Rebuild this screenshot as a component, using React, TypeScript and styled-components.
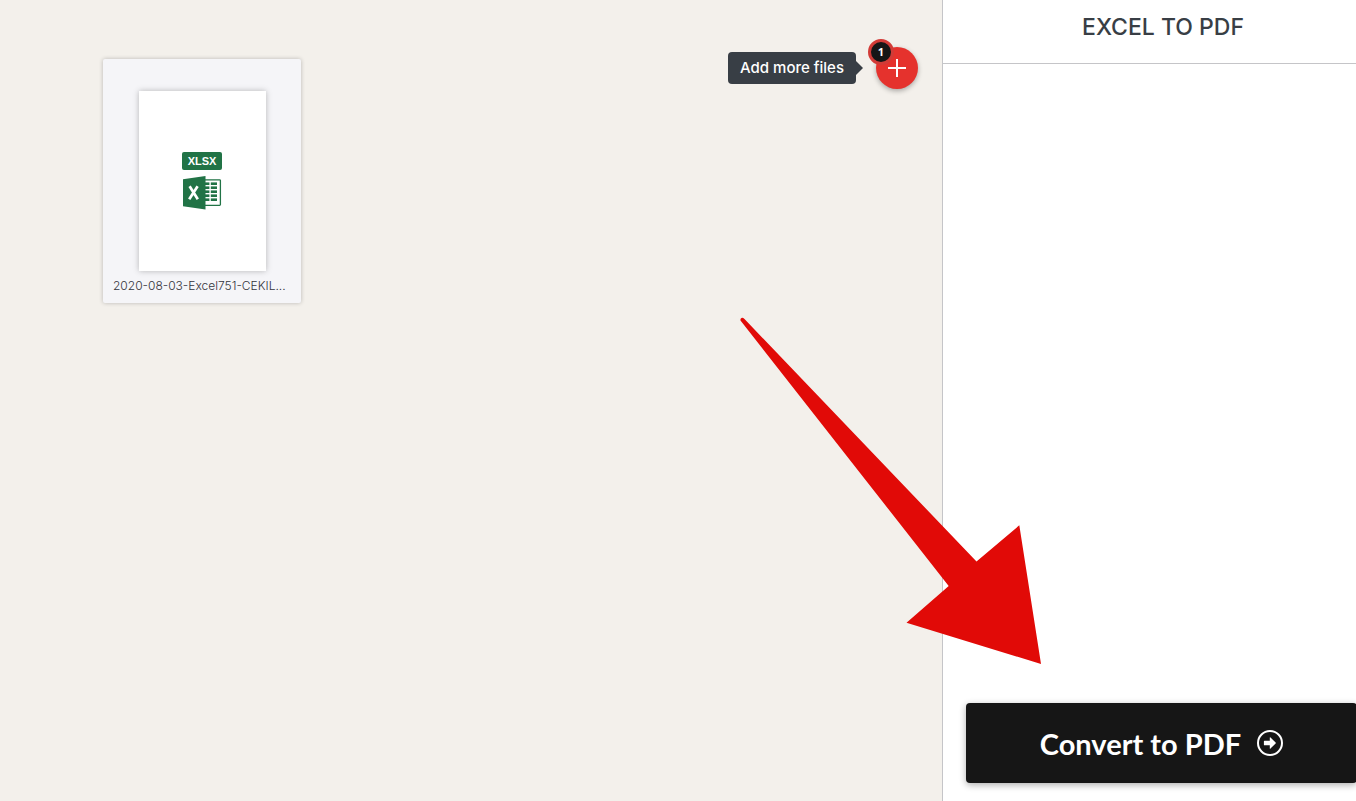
import React from "react";
import styled, { createGlobalStyle } from "styled-components";

const GlobalStyle = createGlobalStyle`
  *, *::before, *::after { box-sizing: border-box; }
  body {
    margin: 0;
    font-family: Inter, "Open Sans", sans-serif;
    color: #33333b;
    background: #f3f0eb;
  }
  button { font: inherit; border: 0; cursor: pointer; }
`;

const Page = styled.div`
  position: relative;
  display: grid;
  grid-template-columns: minmax(0, 1fr) 414px;
  min-height: 100vh;
  overflow: hidden;
`;

const Workspace = styled.main`
  display: flex;
  justify-content: space-between;
  align-items: flex-start;
  padding: 47px 24px 47px 103px;
  background: #f3f0eb;
`;

const FileCard = styled.article`
  display: flex;
  flex-direction: column;
  align-items: center;
  width: 198px;
  height: 244px;
  margin-top: 12px;
  padding-top: 32px;
  border-radius: 2px;
  background: #f5f5f8;
  box-shadow: 0 0 4px rgba(0, 0, 0, 0.24);
`;

const Thumbnail = styled.div`
  display: flex;
  flex-direction: column;
  align-items: center;
  gap: 6px;
  width: 127px;
  height: 180px;
  padding-top: 61px;
  background: #fff;
  box-shadow: 0 0 6px rgba(0, 0, 0, 0.26);
`;

const FormatTag = styled.span`
  width: 40px;
  border-radius: 2px;
  background: #217346;
  color: #fff;
  font: bold 11px/18px "Liberation Sans", Arial, sans-serif;
  text-align: center;
`;

const FileName = styled.p`
  width: 100%;
  margin: 5px 0 0;
  padding: 0 10px;
  font-size: 12px;
  font-weight: 300;
  line-height: 20px;
  white-space: nowrap;
`;

const AddFiles = styled.div`
  display: flex;
  align-items: center;
  gap: 20px;
`;

const Tooltip = styled.span`
  position: relative;
  padding: 0 12px;
  border-radius: 4px;
  background: #383e45;
  color: #fff;
  font-size: 15px;
  font-weight: 500;
  line-height: 32px;

  &::after {
    content: "";
    position: absolute;
    left: 100%;
    top: 9px;
    border: 7px solid transparent;
    border-right: 0;
    border-left-color: #383e45;
  }
`;

const AddButton = styled.button`
  position: relative;
  display: grid;
  place-items: center;
  width: 42px;
  height: 42px;
  padding: 0;
  border-radius: 50%;
  background: #e5322d;
  color: #fff;
  box-shadow: 0 2px 5px rgba(0, 0, 0, 0.3);
`;

const Count = styled.span`
  position: absolute;
  top: -8px;
  left: -8px;
  width: 26px;
  height: 26px;
  border: 3px solid #d23b37;
  border-radius: 50%;
  background: #161616;
  font-family: "Open Sans", sans-serif;
  font-size: 11px;
  font-weight: 700;
  line-height: 20px;
  text-align: center;
`;

const Sidebar = styled.aside`
  display: flex;
  border-left: 1px solid #c5c5c8;
  background: #fff;
  overflow: hidden;
`;

const Panel = styled.div`
  display: flex;
  flex: 0 0 440px;
  flex-direction: column;
  justify-content: space-between;
`;

const PanelTitle = styled.h1`
  margin: 0;
  padding: 11px 0 20px;
  border-bottom: 1px solid #c5c5c8;
  color: #383e45;
  font-size: 23px;
  font-weight: 500;
  line-height: 32px;
  text-align: center;
`;

const ConvertButton = styled.button`
  display: flex;
  align-items: center;
  justify-content: center;
  gap: 16px;
  height: 80px;
  margin: 0 26px 18px 23px;
  border-radius: 4px;
  background: #161616;
  color: #fff;
  font-family: Lato, sans-serif;
  font-size: 29px;
  font-weight: 700;
  box-shadow: 0 2px 7px rgba(0, 0, 0, 0.32);
`;

const Pointer = styled.svg`
  position: absolute;
  right: 315px;
  bottom: 137px;
  pointer-events: none;
`;

const ExcelIcon = () => (
  <svg width="40" height="34" viewBox="0 0 40 34" aria-hidden="true">
    <rect x="22" y="3.8" width="16.4" height="25.6" rx="0.8" fill="#fff" stroke="#217346" strokeWidth="1.3" />
    <g fill="#217346">
      {[6.4, 10.4, 14.4, 18.4, 22.4].map((y) => (
        <React.Fragment key={y}>
          <rect x="23" y={y} width="4.4" height="2.6" />
          <rect x="28.8" y={y} width="6.2" height="2.6" />
        </React.Fragment>
      ))}
      <path d="M1 3.2 23.5 0V33.5L1 30.2Z" />
    </g>
    <path d="M7.6 10.2 15.8 23.2M15.6 10.2 7.2 23.2" stroke="#fff" strokeWidth="2.7" />
  </svg>
);

const PlusIcon = () => (
  <svg width="20" height="20" viewBox="0 0 20 20" aria-hidden="true">
    <path d="M10 1v18M1 10h18" stroke="#fff" strokeWidth="2" />
  </svg>
);

const ArrowCircleIcon = () => (
  <svg width="26" height="26" viewBox="0 0 26 26" aria-hidden="true">
    <circle cx="13" cy="13" r="12" fill="none" stroke="#fff" strokeWidth="2" />
    <path d="M7.4 10.8h5.4V7.6q0-.8.7-.2l5.1 5q.6.6 0 1.2l-5.1 5q-.7.6-.7-.2v-3.2H7.4q-.5 0-.5-.5v-3.4q0-.5.5-.5Z" fill="#fff" />
  </svg>
);

export default function App() {
  return (
    <>
      <GlobalStyle />
      <Page>
        <Workspace>
          <FileCard>
            <Thumbnail>
              <FormatTag>XLSX</FormatTag>
              <ExcelIcon />
            </Thumbnail>
            <FileName>2020-08-03-Excel751-CEKIL...</FileName>
          </FileCard>
          <AddFiles>
            <Tooltip id="add-files-tip" role="tooltip">Add more files</Tooltip>
            <AddButton type="button" aria-labelledby="add-files-tip">
              <PlusIcon />
              <Count>1</Count>
            </AddButton>
          </AddFiles>
        </Workspace>
        <Sidebar>
          <Panel>
            <PanelTitle>EXCEL TO PDF</PanelTitle>
            <ConvertButton type="button">
              Convert to PDF
              <ArrowCircleIcon />
            </ConvertButton>
          </Panel>
        </Sidebar>
        <Pointer width="301" height="347" viewBox="740 317 301 347" aria-hidden="true">
          <path d="M740.5 320.5Q740 318.500 742 317.700 743 317.500 744.500 319L976.500 561.500 1019.300 525.300 1041 664 906.500 622.800 948.700 586Z" fill="#e10a07" />
        </Pointer>
      </Page>
    </>
  );
}
